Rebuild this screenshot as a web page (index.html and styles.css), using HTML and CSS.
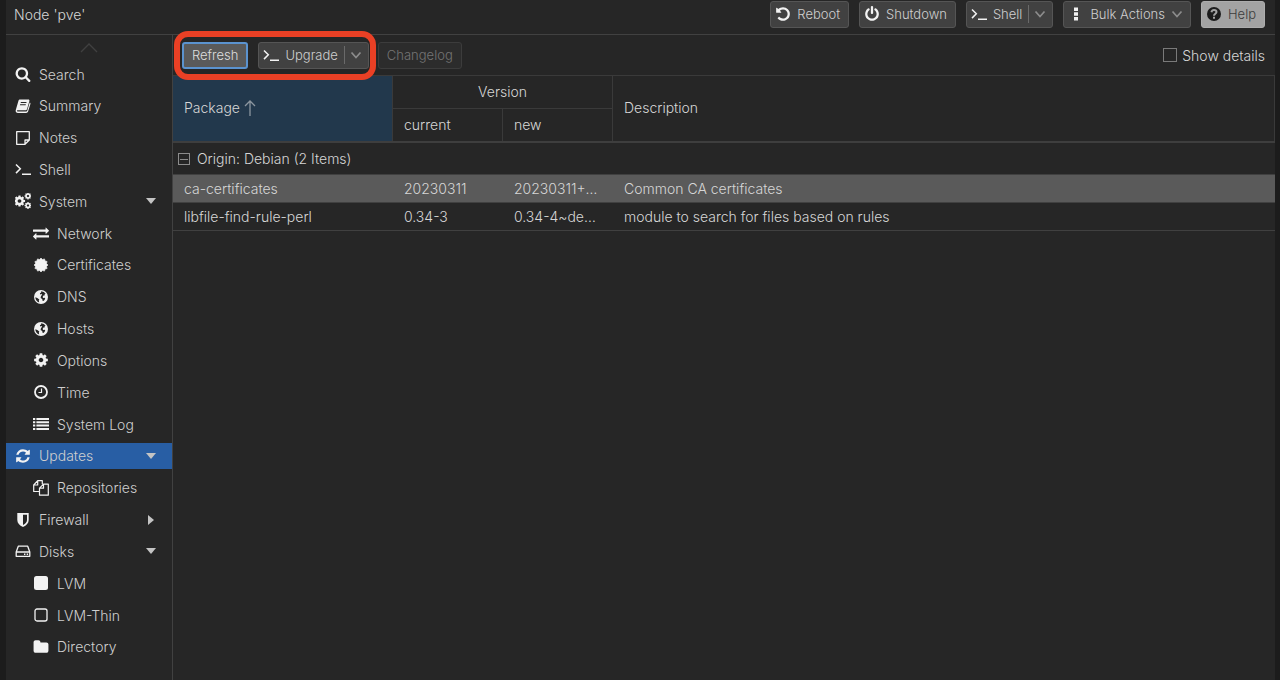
FILE: index.html
```
<!DOCTYPE html>
<html lang="en">
<head>
    <meta charset="UTF-8">
    <title>pve - Updates</title>
    <meta name="viewport" content="width=device-width, initial-scale=1.0">
    <link rel="stylesheet" href="styles.css">
</head>
<body>
    <svg class="sprite" aria-hidden="true">
        <symbol id="search" viewBox="0 0 1792 1792"><path d="M1216 832q0-185-131.5-316.5t-316.5-131.5-316.5 131.5-131.5 316.5 131.5 316.5 316.5 131.5 316.5-131.5 131.5-316.5zm512 832q0 52-38 90t-90 38q-54 0-90-38l-343-342q-179 124-399 124-143 0-273.5-55.5t-225-150-150-225-55.5-273.5 55.5-273.5 150-225 225-150 273.5-55.5 273.5 55.5 225 150 150 225 55.5 273.5q0 220-124 399l343 343q37 37 37 90z"/></symbol>
        <symbol id="book" viewBox="0 0 16 16"><path fill-rule="evenodd" d="M5.2 1.6h8.2c.8 0 1.2.6 1 1.3l-2.3 8c-.3.9-.8 1.3-1.7 1.3H2.6c-.6 0-.8.3-.6.8.2.5.6.6 1.2.6h8c.5 0 .9-.3 1-.8l2.5-8.3c.7.3.9.8.7 1.5l-2.3 7.6c-.3.9-1 1.4-1.9 1.4H3c-1.5 0-2.7-1.3-2.3-2.8L3.4 3c.3-.9.9-1.4 1.8-1.4zM5.9 4.1l-.3 1h5.7l.3-1zM5.2 6.3l-.3 1h5.7l.3-1z"/></symbol>
        <symbol id="note" viewBox="0 0 16 16"><path fill="none" stroke="currentColor" stroke-width="1.3" stroke-linejoin="round" d="M1.7 1.7h12.6v8.3l-4.3 4.3H1.7zM10 14.3V10h4.3"/></symbol>
        <symbol id="terminal" viewBox="0 0 16 16"><path fill="none" stroke="currentColor" stroke-width="1.5" d="M1 3.5l4.3 4.3L1 12.1M7 13.2h9"/></symbol>
        <symbol id="cog" viewBox="0 0 1792 1792"><path d="M1152 896q0-106-75-181t-181-75-181 75-75 181 75 181 181 75 181-75 75-181zm512-109v222q0 12-8 23t-20 13l-185 28q-19 54-39 91 35 50 107 138 10 12 10 25t-9 23q-27 37-99 108t-94 71q-12 0-26-9l-138-108q-44 23-91 38-16 136-29 186-7 28-36 28h-222q-14 0-24.5-8.5t-11.5-21.5l-28-184q-49-16-90-37l-141 107q-10 9-25 9-14 0-25-11-126-114-165-168-7-10-7-23 0-12 8-23 15-21 51-66.5t54-70.5q-27-50-41-99l-183-27q-13-2-21-12.5t-8-23.5v-222q0-12 8-23t19-13l186-28q14-46 39-92-40-57-107-138-10-12-10-24 0-10 9-23 26-36 98.5-107.5t94.5-71.5q13 0 26 10l138 107q44-23 91-38 16-136 29-186 7-28 36-28h222q14 0 24.5 8.5t11.5 21.5l28 184q49 16 90 37l142-107q9-9 24-9 13 0 25 10 129 119 165 170 7 8 7 22 0 12-8 23-15 21-51 66.5t-54 70.5q26 50 41 98l183 28q13 2 21 12.5t8 23.5z"/></symbol>
        <symbol id="cogs" viewBox="0 0 16 16">
            <use href="#cog" x="-2" y="1.5" width="13" height="13"/>
            <use href="#cog" x="9" y="-1" width="8" height="8"/>
            <use href="#cog" x="9" y="8.5" width="8" height="8"/>
        </symbol>
        <symbol id="exchange" viewBox="0 0 1792 1792"><path d="M1792 1184v192q0 13-9.5 22.5t-22.5 9.5h-1376v192q0 13-9.5 22.5t-22.5 9.5q-12 0-24-10l-319-320q-9-9-9-22 0-14 9-23l320-320q9-9 23-9 13 0 22.5 9.5t9.5 22.5v192h1376q13 0 22.5 9.5t9.5 22.5zm0-544q0 14-9 23l-320 320q-9 9-23 9-13 0-22.5-9.5t-9.5-22.5v-192h-1376q-13 0-22.5-9.5t-9.5-22.5v-192q0-13 9.5-22.5t22.5-9.5h1376v-192q0-14 9-23t23-9q12 0 24 10l319 319q9 9 9 23z"/></symbol>
        <symbol id="certificate" viewBox="0 0 16 16"><path stroke="currentColor" stroke-width=".6" stroke-linejoin="round" d="M8 1l1.500 1.500L11.500 1.900l.6 2 2 .6-.6 2L15 8l-1.500 1.500.6 2-2 .6-.6 2-2-.6L8 15l-1.500-1.500-2 .6-.6-2-2-.6.6-2L1 8l1.500-1.500-.6-2 2-.6.6-2 2 .6z"/></symbol>
        <symbol id="globe" viewBox="0 0 16 16"><path fill-rule="evenodd" d="M8 1a7 7 0 1 0 0 14A7 7 0 0 0 8 1zM8.2 2.3l2.600.7 1.900 1.700-1.200.3.500 1.200-1.500.4-.9 1.4.7 1 1.4-.3.5 1.1-1.3 1.900-1.200.4-.5-2-1.600-1.100.4-2 1.200-1.300-.7-.8-1.300.5-.3-1.200 1.200-.7zM2.3 8.2l2 .8 2 1.500-.5 1.300.4 1.700c-2.300-.8-3.800-2.800-3.900-5.300z"/></symbol>
        <symbol id="clock" viewBox="0 0 16 16"><circle cx="8" cy="8" r="6" fill="none" stroke="currentColor" stroke-width="1.8"/><path fill="none" stroke="currentColor" stroke-width="1.2" d="M8.5 4.5v4h-3"/></symbol>
        <symbol id="list" viewBox="0 0 16 16"><path d="M0 2h2.3v2H0zM3.4 2H16v2H3.4zM0 5.3h2.3v2H0zM3.4 5.3H16v2H3.4zM0 8.6h2.3v2H0zM3.4 8.6H16v2H3.4zM0 11.900h2.300v2H0zM3.400 11.900H16v2H3.400z"/></symbol>
        <symbol id="refresh" viewBox="0 0 1792 1792"><path d="M1639 1056q0 5-1 7-64 268-268 434.5t-478 166.5q-146 0-282.5-55t-243.5-157l-129 129q-19 19-45 19t-45-19-19-45v-448q0-26 19-45t45-19h448q26 0 45 19t19 45-19 45l-137 137q71 66 161 102t187 36q134 0 250-65t186-179q11-17 53-117 8-23 30-23h192q13 0 22.5 9.5t9.5 22.5zm25-800v448q0 26-19 45t-45 19h-448q-26 0-45-19t-19-45 19-45l138-138q-148-137-349-137-134 0-250 65t-186 179q-11 17-53 117-8 23-30 23h-199q-13 0-22.5-9.5t-9.5-22.5v-7q65-268 270-434.5t480-166.5q146 0 284 55.5t245 156.5l130-129q19-19 45-19t45 19 19 45z"/></symbol>
        <symbol id="files" viewBox="0 0 16 16"><path fill="none" stroke="currentColor" stroke-width="1.2" stroke-linejoin="round" d="M6.5 11.5H.7V5l4-4.3h4.6v3.5M4.7.7V5h-4M10.5 4.2h4.8v11H6.500v-7zM10.5 4.2v4h-4"/></symbol>
        <symbol id="shield" viewBox="0 0 16 16"><path fill-rule="evenodd" d="M2.3 1h11.400v7c0 3.200-2.200 5.300-5.700 7-3.500-1.700-5.700-3.800-5.700-7zM8 2.700V13c2.600-1.400 4-3 4-5V2.700z"/></symbol>
        <symbol id="disk" viewBox="0 0 16 16"><path fill="none" stroke="currentColor" stroke-width="1.3" stroke-linejoin="round" d="M1.2 9l2.100-5.800h9.400L14.800 9v4.300H1.200zM1.200 9h13.600"/><path d="M9 10.500h1.400v1.400H9zM11.700 10.500h1.400v1.400h-1.400z"/></symbol>
        <symbol id="square" viewBox="0 0 16 16"><rect x="1" y="1" width="14" height="14" rx="2.5"/></symbol>
        <symbol id="square-o" viewBox="0 0 16 16"><rect x="2" y="2" width="12" height="12" rx="2" fill="none" stroke="currentColor" stroke-width="1.3"/></symbol>
        <symbol id="folder" viewBox="0 0 1792 1792"><path d="M1728 608v704q0 92-66 158t-158 66h-1216q-92 0-158-66t-66-158v-960q0-92 66-158t158-66h320q92 0 158 66t66 158v32h672q92 0 158 66t66 158z"/></symbol>
        <symbol id="undo" viewBox="0 0 1792 1792"><path d="M1664 896q0 156-61 298t-164 245-245 164-298 61q-172 0-327-72.5t-264-204.5q-7-10-6.5-22.5t8.5-20.5l137-138q10-9 25-9 16 2 23 12 73 95 179 147t225 52q104 0 198.5-40.5t163.5-109.5 109.5-163.5 40.5-198.5-40.5-198.5-109.5-163.5-163.5-109.5-198.5-40.5q-98 0-188 35.5t-160 101.5l137 138q31 30 14 69-17 40-59 40h-448q-26 0-45-19t-19-45v-448q0-42 40-59 39-17 69 14l130 129q107-101 244.5-156.5t284.5-55.5q156 0 298 61t245 164 164 245 61 298z"/></symbol>
        <symbol id="power" viewBox="0 0 1792 1792"><path d="M1664 896q0 156-61 298t-164 245-245 164-298 61-298-61-245-164-164-245-61-298q0-182 80.5-343t226.5-270q43-32 95.5-25t83.5 50q32 42 24.5 94.5t-49.5 84.5q-98 74-151.5 181t-53.5 228q0 104 40.5 198.5t109.5 163.5 163.5 109.5 198.5 40.5 198.5-40.5 163.5-109.5 109.5-163.5 40.5-198.5q0-121-53.5-228t-151.5-181q-42-32-49.5-84.5t24.5-94.5q31-43 84-50t95 25q146 109 226.5 270t80.5 343zm-640-768v640q0 52-38 90t-90 38-90-38-38-90v-640q0-52 38-90t90-38 90 38 38 90z"/></symbol>
        <symbol id="dots" viewBox="0 0 16 16"><path d="M6 1.500h4V5H6zM6 6.300h4v3.500H6zM6 11h4v3.500H6z"/></symbol>
        <symbol id="help" viewBox="0 0 16 16"><circle cx="8" cy="8" r="7"/><path fill="none" stroke="#a3a3a3" stroke-width="2" d="M5.400 6.300C5.800 4.800 6.800 4.100 8 4.100c1.500 0 2.500.9 2.500 2C10.500 7.800 8 7.700 8 9.800M8 10.800v2"/></symbol>
        <symbol id="chevron" viewBox="0 0 12 12"><path fill="none" stroke="currentColor" stroke-width="1.7" d="M1.5 3.5l4.5 5 4.500-5"/></symbol>
        <symbol id="sort-up" viewBox="0 0 12 18"><path fill="none" stroke="currentColor" stroke-width="1.3" d="M6 17V2M1 7l5-5 5 5"/></symbol>
        <symbol id="scroll-up" viewBox="0 0 18 10"><path fill="none" stroke="currentColor" stroke-width="1.3" d="M1 9l8-8 8 8"/></symbol>
    </svg>

    <div class="panel">
        <header class="title-bar">
            <h1>Node 'pve'</h1>
            <button class="btn"><svg class="icon"><use href="#undo"/></svg>Reboot</button>
            <button class="btn"><svg class="icon"><use href="#power"/></svg>Shutdown</button>
            <button class="btn split"><svg class="icon"><use href="#terminal"/></svg>Shell<svg class="chevron"><use href="#chevron"/></svg></button>
            <button class="btn menu"><svg class="icon"><use href="#dots"/></svg>Bulk Actions<svg class="chevron"><use href="#chevron"/></svg></button>
            <button class="btn help"><svg class="icon"><use href="#help"/></svg>Help</button>
        </header>

        <div class="content">
            <nav class="sidebar">
                <svg class="scroll-up"><use href="#scroll-up"/></svg>
                <ul>
                    <li><a href="#"><svg class="icon"><use href="#search"/></svg>Search</a></li>
                    <li><a href="#"><svg class="icon"><use href="#book"/></svg>Summary</a></li>
                    <li><a href="#"><svg class="icon"><use href="#note"/></svg>Notes</a></li>
                    <li><a href="#"><svg class="icon"><use href="#terminal"/></svg>Shell</a></li>
                    <li><a href="#" class="open"><svg class="icon"><use href="#cogs"/></svg>System</a></li>
                    <li><a href="#" class="sub"><svg class="icon"><use href="#exchange"/></svg>Network</a></li>
                    <li><a href="#" class="sub"><svg class="icon"><use href="#certificate"/></svg>Certificates</a></li>
                    <li><a href="#" class="sub"><svg class="icon"><use href="#globe"/></svg>DNS</a></li>
                    <li><a href="#" class="sub"><svg class="icon"><use href="#globe"/></svg>Hosts</a></li>
                    <li><a href="#" class="sub"><svg class="icon"><use href="#cog"/></svg>Options</a></li>
                    <li><a href="#" class="sub"><svg class="icon"><use href="#clock"/></svg>Time</a></li>
                    <li><a href="#" class="sub"><svg class="icon"><use href="#list"/></svg>System Log</a></li>
                    <li><a href="#" class="open active"><svg class="icon"><use href="#refresh"/></svg>Updates</a></li>
                    <li><a href="#" class="sub"><svg class="icon"><use href="#files"/></svg>Repositories</a></li>
                    <li><a href="#" class="closed"><svg class="icon"><use href="#shield"/></svg>Firewall</a></li>
                    <li><a href="#" class="open"><svg class="icon"><use href="#disk"/></svg>Disks</a></li>
                    <li><a href="#" class="sub"><svg class="icon"><use href="#square"/></svg>LVM</a></li>
                    <li><a href="#" class="sub"><svg class="icon"><use href="#square-o"/></svg>LVM-Thin</a></li>
                    <li><a href="#" class="sub"><svg class="icon"><use href="#folder"/></svg>Directory</a></li>
                </ul>
            </nav>

            <main>
                <div class="toolbar">
                    <div class="marked">
                        <button class="btn focused">Refresh</button>
                        <button class="btn split"><svg class="icon"><use href="#terminal"/></svg>Upgrade<svg class="chevron"><use href="#chevron"/></svg></button>
                    </div>
                    <button class="btn" disabled>Changelog</button>
                    <label class="details"><input type="checkbox">Show details</label>
                </div>

                <table>
                    <colgroup>
                        <col class="col-package">
                        <col class="col-version">
                        <col class="col-version">
                        <col>
                    </colgroup>
                    <thead>
                        <tr>
                            <th rowspan="2" class="sorted">Package<svg class="sort-up"><use href="#sort-up"/></svg></th>
                            <th colspan="2" class="group">Version</th>
                            <th rowspan="2">Description</th>
                        </tr>
                        <tr>
                            <th>current</th>
                            <th>new</th>
                        </tr>
                    </thead>
                    <tbody>
                        <tr class="origin">
                            <td colspan="4"><span class="collapse"></span>Origin: Debian (2 Items)</td>
                        </tr>
                        <tr class="selected">
                            <td>ca-certificates</td>
                            <td>20230311</td>
                            <td>20230311+…</td>
                            <td>Common CA certificates</td>
                        </tr>
                        <tr>
                            <td>libfile-find-rule-perl</td>
                            <td>0.34-3</td>
                            <td>0.34-4~de…</td>
                            <td>module to search for files based on rules</td>
                        </tr>
                    </tbody>
                </table>
            </main>
        </div>
    </div>
</body>
</html>
```
FILE: styles.css
```
* {
    box-sizing: border-box;
}

body {
    margin: 0;
    padding: 0 5px 0 6px;
    background: #1c1c1c;
    color: #d6d6d6;
    font-family: Inter, "Liberation Sans", sans-serif;
    font-size: 14px;
    font-weight: 300;
}

.sprite {
    display: none;
}

svg {
    fill: currentColor;
    flex: none;
}

.panel {
    min-height: 100vh;
    display: flex;
    flex-direction: column;
    background: #262626;
}

.title-bar {
    display: flex;
    align-items: center;
    gap: 10px;
    height: 35px;
    padding: 0 10px 6px 8px;
    border-bottom: 1px solid #414141;
}

h1 {
    margin: 0 auto 0 0;
    font-size: 14px;
    font-weight: 300;
}

.icon {
    width: 16px;
    height: 16px;
    color: #f2f2f2;
}

/* buttons */
.btn {
    display: flex;
    align-items: center;
    gap: 6px;
    height: 27px;
    padding: 0 8px 0 4px;
    background: #414141;
    border: 1px solid #555;
    border-radius: 3px;
    color: #cfcfcf;
    font-family: inherit;
    font-size: 13px;
    font-weight: 300;
}

.chevron {
    width: 12px;
    height: 12px;
    color: #8c8c8c;
}

.split .chevron {
    width: 18px;
    height: 18px;
    padding: 3px 0 3px 5px;
    border-left: 1px solid #6a6a6a;
}

.btn.split {
    padding-right: 6px;
}

.btn.menu {
    padding-right: 7px;
}

.btn.help {
    background: #a3a3a3;
    border-color: #adadad;
    color: #3c3c3c;
}

.help .icon {
    color: #1c1c1c;
}

.btn.focused {
    padding: 0 8px;
    background: #5a5a5a;
    border: 2px solid #5b93cf;
    color: #dedede;
}

.btn:disabled {
    padding: 0 8px;
    background: #2c2c2c;
    border-color: #3c3c3c;
    color: #747474;
}

.content {
    flex: 1;
    display: flex;
}

/* sidebar */
.sidebar {
    width: 167px;
    flex: none;
    display: flex;
    flex-direction: column;
    align-items: center;
    padding: 8px 0 20px;
    border-right: 1px solid #414141;
}

.scroll-up {
    width: 18px;
    height: 10px;
    color: #404040;
}

.sidebar ul {
    flex: 1;
    width: 100%;
    margin: 8px 0 0;
    padding: 0;
    list-style: none;
    display: flex;
    flex-direction: column;
    justify-content: space-between;
}

.sidebar a {
    display: flex;
    align-items: center;
    gap: 8px;
    height: 26px;
    padding: 0 16px 0 9px;
    color: #cfcfcf;
    text-decoration: none;
}

.sidebar a.sub {
    padding-left: 27px;
}

.sidebar a.active {
    background: #285ea4;
}

.open::after,
.closed::after {
    content: "";
    margin-left: auto;
    border: 5px solid transparent;
}

.open::after {
    border-top: 6px solid #c4c4c4;
    border-bottom: 0;
}

.closed::after {
    margin-right: 2px;
    border-left: 6px solid #c4c4c4;
    border-right: 0;
}

/* package list */
main {
    flex: 1;
    min-width: 0;
}

.toolbar {
    display: flex;
    align-items: center;
    gap: 9px;
    height: 40px;
    padding: 0 10px 0 9px;
}

.marked {
    position: relative;
    display: flex;
    gap: 10px;
}

/* highlight around the two buttons */
.marked::after {
    content: "";
    position: absolute;
    inset: -11px -7px -11px -8px;
    border: 6px solid #ea4025;
    border-radius: 14px;
    pointer-events: none;
}

.details {
    display: flex;
    align-items: center;
    gap: 5px;
    margin-left: auto;
}

.details input {
    appearance: none;
    width: 14px;
    height: 14px;
    margin: 0;
    border: 1px solid #7a7a7a;
}

table {
    width: 100%;
    table-layout: fixed;
    border-collapse: separate;
    border-spacing: 0;
}

.col-package {
    width: 220px;
}

.col-version {
    width: 110px;
}

th {
    height: 33px;
    padding: 0 11px 2px;
    border-top: 1px solid #3a3a3a;
    border-right: 1px solid #3a3a3a;
    font-weight: 300;
    text-align: left;
}

th.group {
    text-align: center;
}

th.sorted {
    background: #22384c;
}

.sort-up {
    width: 12px;
    height: 18px;
    margin-left: 4px;
    vertical-align: -4px;
    color: #8c969f;
}

td {
    height: 28px;
    padding: 0 11px;
    border-bottom: 1px solid #404040;
    white-space: nowrap;
}

.origin td {
    height: 34px;
    padding: 0 5px;
    border-top: 2px solid #3e3e3e;
}

.collapse {
    display: inline-block;
    width: 12px;
    height: 12px;
    margin-right: 7px;
    border: 1px solid #8c8c8c;
    vertical-align: -1px;
    background: linear-gradient(#8c8c8c, #8c8c8c) center / 8px 1px no-repeat;
}

.selected td {
    background: #5a5a5a;
}
```
